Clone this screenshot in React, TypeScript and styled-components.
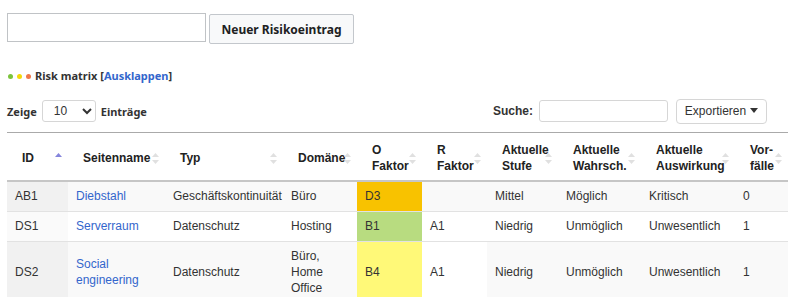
import React from "react";
import styled, { createGlobalStyle } from "styled-components";

const GlobalStyle = createGlobalStyle`
  body {
    margin: 0;
    background: #ffffff;
    color: #202122;
    font-family: "Noto Sans", "Open Sans", sans-serif;
  }
`;

const Page = styled.div`
  padding: 13px 11px 0 7px;
`;

const TopBar = styled.div`
  display: flex;
  align-items: flex-start;
  gap: 3px;
`;

const TitleInput = styled.input`
  box-sizing: border-box;
  width: 199px;
  height: 29px;
  border: 1px solid #c0c3c6;
  border-radius: 0;
  padding: 0 6px;
`;

const NewButton = styled.button`
  box-sizing: border-box;
  width: 145px;
  height: 30px;
  margin-top: 1px;
  padding: 0;
  background: #f8f9fa;
  border: 1px solid #c3c7cc;
  border-radius: 2px;
  color: #202122;
  font-family: "Noto Sans", "Open Sans", sans-serif;
  font-weight: 700;
  font-size: 12px;
`;

const MatrixLine = styled.div`
  display: flex;
  align-items: center;
  margin-top: 24px;
  padding-left: 1px;
  font-size: 11px;
  font-weight: 700;
  line-height: 16px;
  color: #333;
`;

const Dot = styled.span<{ $color: string }>`
  width: 5px;
  height: 5px;
  border-radius: 50%;
  background: ${({ $color }) => $color};
  margin-right: 4px;
`;

const Link = styled.a`
  color: #3366cc;
  text-decoration: none;
`;

const Controls = styled.div`
  display: flex;
  justify-content: space-between;
  align-items: center;
  margin-top: 14px;
  height: 26px;
  padding-right: 21px;
`;

const LengthLabel = styled.label`
  display: flex;
  align-items: center;
  gap: 5px;
  font-size: 11px;
  font-weight: 700;
  color: #333;
`;

const LengthSelect = styled.select`
  box-sizing: border-box;
  width: 54px;
  height: 22px;
  border: 1px solid #d6d6d6;
  border-radius: 3px;
  background: #fff;
  padding: 0 0 0 7px;
  font-family: "Liberation Sans", Arial, sans-serif;
  font-size: 12px;
  color: #333;
`;

const RightControls = styled.div`
  display: flex;
  align-items: center;
`;

const SearchLabel = styled.label`
  display: flex;
  align-items: center;
  gap: 6px;
  font-family: "Liberation Sans", Arial, sans-serif;
  font-size: 12px;
  font-weight: 700;
  color: #333;
`;

const SearchInput = styled.input`
  box-sizing: border-box;
  width: 129px;
  height: 22px;
  border: 1px solid #d6d6d6;
  border-radius: 3px;
`;

const ExportButton = styled.button`
  box-sizing: border-box;
  width: 91px;
  height: 25px;
  margin-left: 8px;
  padding: 0;
  background: #fff;
  border: 1px solid #d6d6d6;
  border-radius: 4px;
  font-family: "Liberation Sans", Arial, sans-serif;
  font-size: 12px;
  color: #333;
`;

const Caret = styled.span`
  display: inline-block;
  margin-left: 4px;
  vertical-align: 2px;
  border-left: 4px solid transparent;
  border-right: 4px solid transparent;
  border-top: 5px solid #333;
`;

const Table = styled.table`
  margin-top: 8px;
  width: 781px;
  table-layout: fixed;
  border-collapse: collapse;
  border-top: 1px solid #aaa;
  font-family: "Liberation Sans", Arial, sans-serif;
  font-size: 12px;
  line-height: 16px;
  color: #333;
`;

const HeadCell = styled.th`
  position: relative;
  text-align: left;
  vertical-align: middle;
  padding: 9px 16px 6px 15px;
  font-weight: 700;
  border-bottom: 2px solid #c6c6c6;
  color: #222;
`;

const SortIcon = styled.svg`
  position: absolute;
  right: 6px;
  top: 50%;
  margin-top: -4px;
`;

const Row = styled.tr`
  border-bottom: 1px solid #e2e2e2;
`;

const Cell = styled.td<{ $bg?: string }>`
  padding: 6px 8px 7px;
  vertical-align: middle;
  background: ${({ $bg }) => $bg ?? "transparent"};
`;

const Linked = styled.a`
  color: #3366cc;
  text-decoration: none;
`;

type Col = { label: React.ReactNode; width: number; sort: "asc" | "both" };

const columns: Col[] = [
  { label: "ID", width: 61, sort: "asc" },
  { label: "Seitenname", width: 97, sort: "both" },
  { label: "Typ", width: 118, sort: "both" },
  { label: "Domäne", width: 74, sort: "both" },
  { label: <>O<br />Faktor</>, width: 65, sort: "both" },
  { label: <>R<br />Faktor</>, width: 65, sort: "both" },
  { label: <>Aktuelle<br />Stufe</>, width: 71, sort: "both" },
  { label: <>Aktuelle<br />Wahrsch.</>, width: 83, sort: "both" },
  { label: <>Aktuelle<br />Auswirkung</>, width: 94, sort: "both" },
  { label: <>Vor-<br />fälle</>, width: 53, sort: "both" },
];

type Risk = {
  id: string;
  name: React.ReactNode;
  typ: string;
  domain: React.ReactNode;
  o: string;
  oColor: string;
  r: string;
  stufe: string;
  wahr: string;
  wirk: string;
  count: string;
};

const rows: Risk[] = [
  {
    id: "AB1", name: "Diebstahl", typ: "Geschäftskontinuität", domain: "Büro",
    o: "D3", oColor: "#f8c200", r: "", stufe: "Mittel", wahr: "Möglich", wirk: "Kritisch", count: "0",
  },
  {
    id: "DS1", name: "Serverraum", typ: "Datenschutz", domain: "Hosting",
    o: "B1", oColor: "#b8dc80", r: "A1", stufe: "Niedrig", wahr: "Unmöglich", wirk: "Unwesentlich", count: "1",
  },
  {
    id: "DS2", name: <>Social<br />engineering</>, typ: "Datenschutz", domain: <>Büro,<br />Home<br />Office</>,
    o: "B4", oColor: "#fff978", r: "A1", stufe: "Niedrig", wahr: "Unmöglich", wirk: "Unwesentlich", count: "1",
  },
];

const Sort = ({ kind }: { kind: "asc" | "both" }) => (
  <SortIcon width="7" height="11" viewBox="0 0 7 11">
    <path d="M3.5 0 L7 4 L0 4 Z" fill={kind === "asc" ? "#8585dc" : "#e0e0e0"} />
    {kind === "both" && <path d="M0 7 L7 7 L3.5 11 Z" fill="#e0e0e0" />}
  </SortIcon>
);

export default function App() {
  return (
    <Page>
      <GlobalStyle />
      <TopBar>
        <TitleInput />
        <NewButton>Neuer Risikoeintrag</NewButton>
      </TopBar>

      <MatrixLine>
        <Dot $color="#7cc43c" />
        <Dot $color="#f5d90a" />
        <Dot $color="#f0784a" />
        Risk matrix&nbsp;[<Link href="#">Ausklappen</Link>]
      </MatrixLine>

      <Controls>
        <LengthLabel>
          Zeige
          <LengthSelect defaultValue="10">
            <option value="10">10</option>
            <option value="25">25</option>
            <option value="50">50</option>
          </LengthSelect>
          Einträge
        </LengthLabel>
        <RightControls>
          <SearchLabel>
            Suche:
            <SearchInput />
          </SearchLabel>
          <ExportButton>
            Exportieren<Caret />
          </ExportButton>
        </RightControls>
      </Controls>

      <Table>
        <colgroup>
          {columns.map((c, i) => (
            <col key={i} style={{ width: c.width }} />
          ))}
        </colgroup>
        <thead>
          <tr>
            {columns.map((c, i) => (
              <HeadCell key={i}>
                {c.label}
                <Sort kind={c.sort} />
              </HeadCell>
            ))}
          </tr>
        </thead>
        <tbody>
          {rows.map((r, i) => {
            const odd = i % 2 === 0;
            const stripe = odd ? "#f9f9f9" : "#ffffff";
            const idBg = odd ? "#f1f1f1" : "#fafafa";
            const rBg = i === 2 ? "#ffffff" : stripe;
            return (
              <Row key={r.id}>
                <Cell $bg={idBg}>{r.id}</Cell>
                <Cell $bg={stripe}><Linked href="#">{r.name}</Linked></Cell>
                <Cell $bg={stripe}>{r.typ}</Cell>
                <Cell $bg={stripe}>{r.domain}</Cell>
                <Cell $bg={r.oColor}>{r.o}</Cell>
                <Cell $bg={rBg}>{r.r}</Cell>
                <Cell $bg={stripe}>{r.stufe}</Cell>
                <Cell $bg={stripe}>{r.wahr}</Cell>
                <Cell $bg={stripe}>{r.wirk}</Cell>
                <Cell $bg={stripe}>{r.count}</Cell>
              </Row>
            );
          })}
        </tbody>
      </Table>
    </Page>
  );
}
